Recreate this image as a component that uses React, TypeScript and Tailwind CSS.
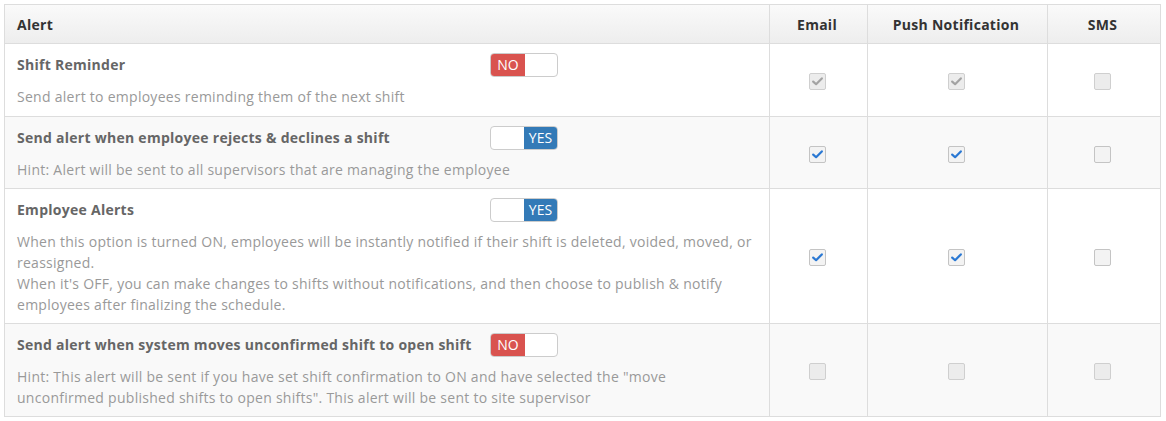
type Channel = "on" | "off" | "on-disabled" | "off-disabled";

type AlertRow = {
  title: string;
  enabled: boolean;
  lines: string[];
  email: Channel;
  push: Channel;
  sms: Channel;
};

const rows: AlertRow[] = [
  {
    title: "Shift Reminder",
    enabled: false,
    lines: ["Send alert to employees reminding them of the next shift"],
    email: "on-disabled",
    push: "on-disabled",
    sms: "off-disabled",
  },
  {
    title: "Send alert when employee rejects & declines a shift",
    enabled: true,
    lines: ["Hint: Alert will be sent to all supervisors that are managing the employee"],
    email: "on",
    push: "on",
    sms: "off",
  },
  {
    title: "Employee Alerts",
    enabled: true,
    lines: [
      "When this option is turned ON, employees will be instantly notified if their shift is deleted, voided, moved, or reassigned.",
      "When it's OFF, you can make changes to shifts without notifications, and then choose to publish & notify employees after finalizing the schedule.",
    ],
    email: "on",
    push: "on",
    sms: "off",
  },
  {
    title: "Send alert when system moves unconfirmed shift to open shift",
    enabled: false,
    lines: [
      'Hint: This alert will be sent if you have set shift confirmation to ON and have selected the "move unconfirmed published shifts to open shifts". This alert will be sent to site supervisor',
    ],
    email: "off-disabled",
    push: "off-disabled",
    sms: "off-disabled",
  },
];

function Toggle({ on }: { on: boolean }) {
  return (
    <div className="flex h-6 w-[68px] overflow-hidden rounded-[4px] border border-[#ccc] bg-white text-[14px] leading-none tracking-normal text-white">
      {on ? (
        <>
          <span className="w-[33px]" />
          <span className="flex flex-1 items-center justify-center bg-[#337ab7]">YES</span>
        </>
      ) : (
        <>
          <span className="flex w-[34px] items-center justify-center bg-[#d9534f]">NO</span>
          <span className="flex-1" />
        </>
      )}
    </div>
  );
}

function Check({ state }: { state: Channel }) {
  const disabled = state.endsWith("disabled");
  const checked = state.startsWith("on");

  return (
    <span
      className={
        disabled
          ? "mx-auto mt-[3px] flex h-[17px] w-[17px] items-center justify-center rounded-[2px] border border-[#cfcfcf] bg-[#ececec]"
          : "mx-auto mt-[3px] flex h-[17px] w-[17px] items-center justify-center rounded-[2px] border border-[#c4c4c4] bg-[#f3f3f3]"
      }
    >
      {checked && (
        <svg width="11" height="9" viewBox="0 0 11 9">
          <path
            d="M1.2 4.6 L4.1 7.2 L9.8 1.4"
            fill="none"
            stroke={disabled ? "#a3a3a3" : "#2a78d3"}
            strokeWidth="2.2"
            strokeLinecap="round"
            strokeLinejoin="round"
          />
        </svg>
      )}
    </span>
  );
}

export default function App() {
  return (
    <div className="bg-white p-1 font-['Open_Sans',sans-serif] text-[14px] tracking-[0.27px]">
      <table className="w-[1156px] table-fixed border-collapse border border-[#ddd]">
        <colgroup>
          <col className="w-[765px]" />
          <col className="w-[98px]" />
          <col className="w-[180px]" />
          <col className="w-[113px]" />
        </colgroup>
        <thead>
          <tr className="h-[39px] bg-gradient-to-b from-[#fafafa] to-[#ededed] text-[#333]">
            <th className="border border-[#ddd] px-3 text-left font-bold">Alert</th>
            <th className="border border-[#ddd] pr-[3px] font-bold">Email</th>
            <th className="border border-[#ddd] pr-[3px] font-bold">Push Notification</th>
            <th className="border border-[#ddd] pr-[3px] font-bold">SMS</th>
          </tr>
        </thead>
        <tbody>
          {rows.map((row, index) => (
            <tr key={row.title} className={index % 2 === 1 ? "bg-[#f9f9f9]" : "bg-white"}>
              <td
                className={
                  index === 0
                    ? "border border-[#ddd] px-3 pt-[9px] pb-[9px] align-top"
                    : "border border-[#ddd] px-3 pt-[9px] pb-2 align-top"
                }
              >
                <div className="flex h-6 items-center">
                  <span className="w-[473px] pb-[2px] font-bold text-[#666]">{row.title}</span>
                  <Toggle on={row.enabled} />
                </div>
                <div className="mt-[9px] leading-[21px] text-[#999]">
                  {row.lines.map((line) => (
                    <p key={line}>{line}</p>
                  ))}
                </div>
              </td>
              <td className="border border-[#ddd] pr-[3px] align-middle">
                <Check state={row.email} />
              </td>
              <td className="border border-[#ddd] pr-[3px] align-middle">
                <Check state={row.push} />
              </td>
              <td className="border border-[#ddd] pr-[3px] align-middle">
                <Check state={row.sms} />
              </td>
            </tr>
          ))}
        </tbody>
      </table>
    </div>
  );
}
